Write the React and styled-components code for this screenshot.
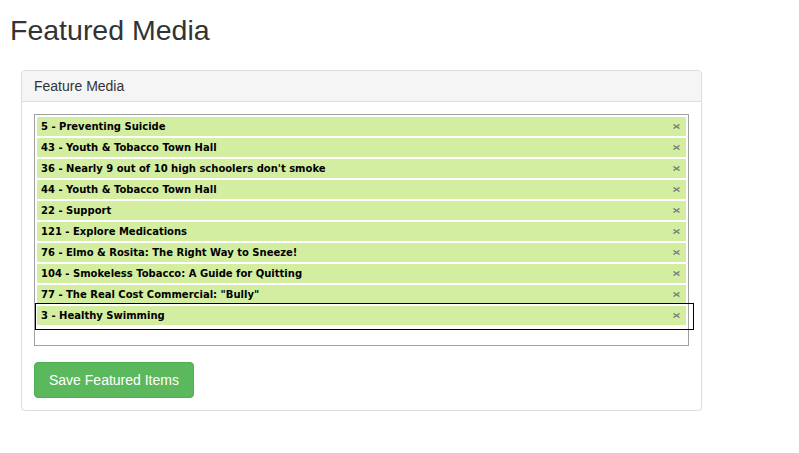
import React from "react";
import styled, { createGlobalStyle } from "styled-components";

const items = [
  "5 - Preventing Suicide",
  "43 - Youth & Tobacco Town Hall",
  "36 - Nearly 9 out of 10 high schoolers don't smoke",
  "44 - Youth & Tobacco Town Hall",
  "22 - Support",
  "121 - Explore Medications",
  "76 - Elmo & Rosita: The Right Way to Sneeze!",
  "104 - Smokeless Tobacco: A Guide for Quitting",
  '77 - The Real Cost Commercial: "Bully"',
  "3 - Healthy Swimming",
];

export default function App() {
  return (
    <Page>
      <GlobalStyle />
      <Title>Featured Media</Title>
      <Panel>
        <PanelHeading>Feature Media</PanelHeading>
        <PanelBody>
          <MediaList>
            {items.map((label, i) => (
              <MediaItem key={i} $active={i === items.length - 1}>
                <span>{label}</span>
                <RemoveIcon viewBox="0 0 7 5" aria-label="remove">
                  <path d="M0.5 0.5 L6.5 4.5 M6.5 0.5 L0.5 4.5" />
                </RemoveIcon>
              </MediaItem>
            ))}
          </MediaList>
          <SaveButton type="button">Save Featured Items</SaveButton>
        </PanelBody>
      </Panel>
    </Page>
  );
}

const GlobalStyle = createGlobalStyle`
  body {
    margin: 0;
    background: #fff;
    font-family: "Liberation Sans", Arial, sans-serif;
    color: #333;
  }
`;

const Page = styled.div`
  padding: 0 10px;
`;

const Title = styled.h1`
  margin: 0;
  padding-top: 12px;
  font-size: 28.5px;
  font-weight: 400;
  line-height: 36px;
  color: #333;
`;

const Panel = styled.div`
  margin: 22px 0 0 11px;
  width: 679px;
  border: 1px solid #ddd;
  border-radius: 4px;
  box-shadow: 0 1px 1px rgba(0, 0, 0, 0.05);
`;

const PanelHeading = styled.div`
  padding: 5px 12px;
  line-height: 20px;
  font-size: 14px;
  color: #333;
  background: #f5f5f5;
  border-bottom: 1px solid #ddd;
  border-radius: 3px 3px 0 0;
`;

const PanelBody = styled.div`
  padding: 12px;
`;

const MediaList = styled.ul`
  list-style: none;
  margin: 0 0 16px;
  padding: 2px 2px 20px;
  border: 1px solid #a0a0a0;
  display: flex;
  flex-direction: column;
  gap: 2px;
`;

const MediaItem = styled.li`
  position: relative;
  display: flex;
  align-items: center;
  justify-content: space-between;
  height: 19px;
  padding: 0 6px 0 4px;
  background: #d4eea1;
  font-family: "DejaVu Sans", Verdana, sans-serif;
  font-weight: 700;
  font-size: 10px;
  color: #000;

  &::after {
    content: "";
    display: ${(p) => (p.$active ? "block" : "none")};
    position: absolute;
    left: -2px;
    right: -8px;
    top: -3px;
    bottom: -5px;
    border: 1px solid #000;
    pointer-events: none;
  }
`;

const RemoveIcon = styled.svg`
  width: 7px;
  height: 5px;
  stroke: #7a7a7a;
  stroke-width: 1.4;
  fill: none;
`;

const SaveButton = styled.button`
  display: block;
  height: 36px;
  padding: 0 14px;
  font-family: "Liberation Sans", Arial, sans-serif;
  font-size: 14px;
  color: #fff;
  background: #5cb85c;
  border: 1px solid #4cae4c;
  border-radius: 4px;
  cursor: pointer;
`;
